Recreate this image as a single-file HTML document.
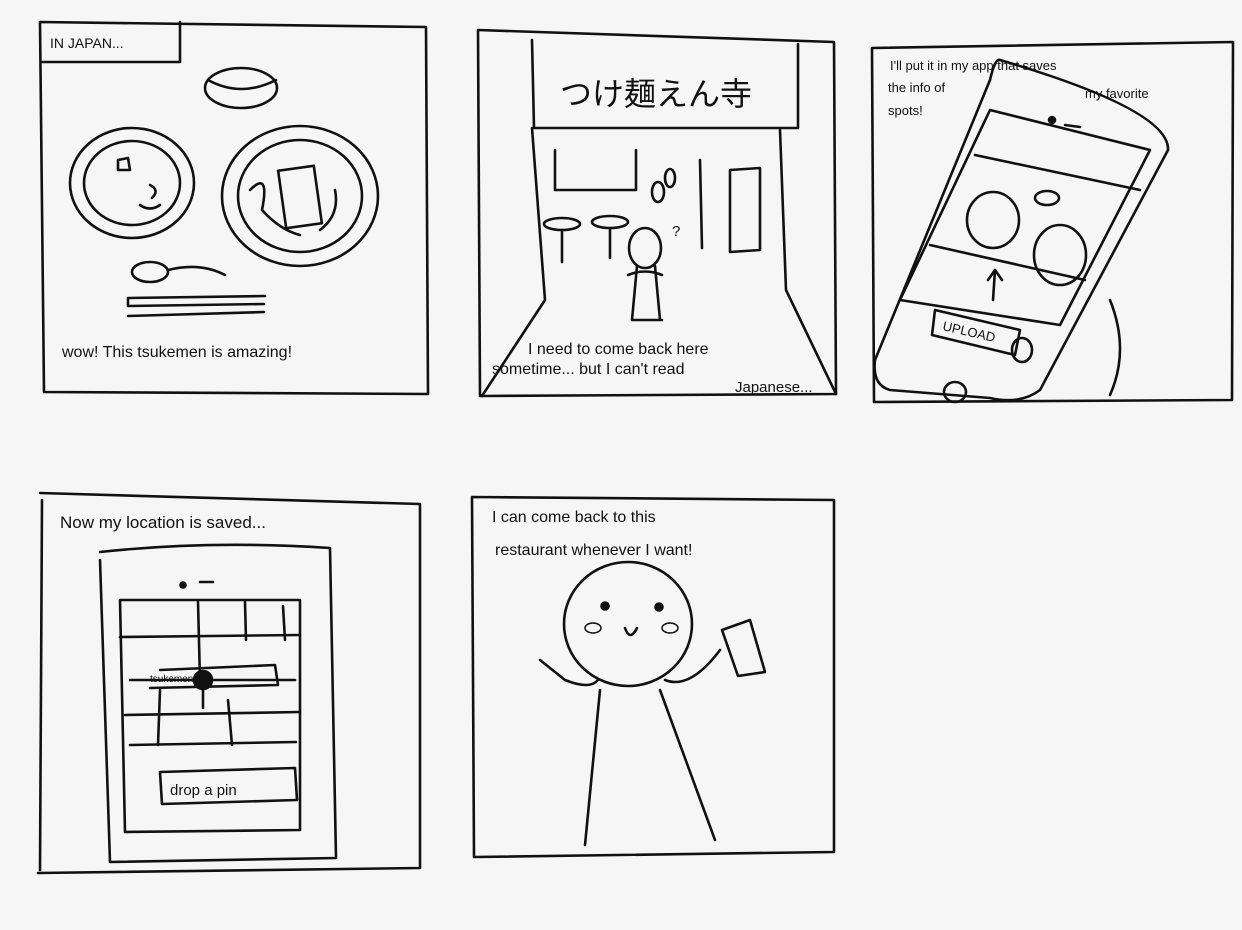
<!DOCTYPE html>
<html><head><meta charset="utf-8"><style>
html,body{margin:0;padding:0;background:#f6f6f6;}
svg{display:block}
text{font-family:"Liberation Sans","Noto Sans CJK JP",sans-serif;fill:#111}
</style></head><body>
<svg width="1242" height="930" viewBox="0 0 1242 930" xmlns="http://www.w3.org/2000/svg">
<rect width="1242" height="930" fill="#f6f6f6"/>
<g fill="none" stroke="#111" stroke-width="2.6" stroke-linecap="round" stroke-linejoin="round">
<!-- Panel 1 -->
<path d="M40 22 L426 27 L428 394 L44 392 Z"/>
<path d="M42 62 L180 62 L180 22"/>
<ellipse cx="241" cy="88" rx="36" ry="20"/>
<path d="M208 80 Q241 98 276 80"/>
<ellipse cx="132" cy="183" rx="62" ry="55"/>
<ellipse cx="132" cy="183" rx="48" ry="42"/>
<path d="M118 160 L128 158 L130 170 L118 170 Z M150 185 Q160 190 152 198 M140 205 Q150 212 160 205"/>
<ellipse cx="300" cy="196" rx="78" ry="70"/>
<ellipse cx="300" cy="196" rx="62" ry="56"/>
<rect x="282" y="168" width="36" height="58" transform="rotate(-8 300 197)"/>
<path d="M250 190 Q270 170 262 210 Q280 230 300 235 M320 230 Q340 215 335 190"/>
<ellipse cx="150" cy="272" rx="18" ry="10"/>
<path d="M168 270 Q200 262 225 275"/>
<path d="M128 298 L265 296 M128 306 L264 304 M128 316 L264 312 M128 298 L128 306"/>
<!-- Panel 2 -->
<path d="M478 30 L834 42 L836 394 L480 396 Z"/>
<path d="M532 40 L534 128 L798 128 L798 44"/>
<path d="M532 128 L545 300 L482 396 M780 130 L786 290 L836 394"/>
<path d="M555 150 L555 190 L636 190 L636 150"/>
<path d="M700 160 L702 248 M730 170 L760 168 L760 250 L730 252 Z"/>
<ellipse cx="562" cy="224" rx="18" ry="6"/><path d="M562 230 L562 262"/>
<ellipse cx="610" cy="222" rx="18" ry="6"/><path d="M610 228 L610 258"/>
<ellipse cx="645" cy="248" rx="16" ry="20"/>
<path d="M628 275 Q645 268 662 275 M637 266 L632 320 M655 266 L660 320 M632 320 L662 320"/>
<ellipse cx="658" cy="192" rx="6" ry="10"/><ellipse cx="670" cy="178" rx="5" ry="9"/>
<!-- Panel 3 -->
<path d="M872 48 L1233 42 L1232 400 L874 402 Z"/>
<path d="M1000 60 Q1170 110 1168 150 L1040 390 Q1020 405 990 398 L890 390 Q872 385 875 360 L990 80 Q995 58 1000 60 Z"/>
<path d="M990 110 L1150 150 L1060 325 L900 300 Z"/>
<path d="M975 155 L1140 190 M930 245 L1085 280"/>
<ellipse cx="993" cy="220" rx="26" ry="28"/><ellipse cx="1060" cy="255" rx="26" ry="30"/>
<ellipse cx="1047" cy="198" rx="12" ry="7"/>
<path d="M935 310 L1020 330 L1015 355 L932 335 Z"/>
<path d="M993 300 L995 270 M988 280 L995 270 L1002 280"/>
<ellipse cx="1022" cy="350" rx="10" ry="12"/>
<ellipse cx="955" cy="392" rx="11" ry="10"/>
<path d="M1110 300 Q1130 350 1110 395"/>
<circle cx="1052" cy="120" r="3" fill="#111"/><path d="M1065 125 L1080 127"/>
<!-- Panel 4 -->
<path d="M40 493 L420 504 L420 868 L38 873 M42 500 L40 870"/>
<path d="M100 552 Q210 540 330 548 L336 858 L110 862 L100 560"/>
<path d="M120 600 L300 600 L300 830 L125 832 Z"/>
<path d="M120 637 L300 635 M130 680 L295 680 M125 715 L300 712 M130 745 L296 742"/>
<path d="M198 602 L200 680 M245 602 L246 640 M283 606 L285 640 M160 690 L158 745 M228 700 L232 745"/>
<path d="M160 670 L275 665 L278 685 L150 688"/>
<circle cx="203" cy="680" r="9" fill="#111"/><path d="M203 688 L203 708"/>
<path d="M160 772 L295 768 L297 800 L162 804 Z"/>
<circle cx="183" cy="585" r="2.5" fill="#111"/><path d="M200 582 L213 582"/>
<!-- Panel 5 -->
<path d="M472 497 L834 500 L834 852 L474 857 Z"/>
<ellipse cx="628" cy="624" rx="64" ry="62"/>
<circle cx="605" cy="606" r="3.5" fill="#111"/><circle cx="659" cy="607" r="3.5" fill="#111"/>
<path d="M625 628 Q630 642 637 628"/>
<ellipse cx="593" cy="628" rx="8" ry="5" stroke-width="1.5"/><ellipse cx="670" cy="628" rx="8" ry="5" stroke-width="1.5"/>
<path d="M598 680 Q590 690 565 680 L540 660 M600 690 L585 845 M665 680 Q690 690 720 650 M660 690 L715 840"/>
<path d="M722 630 L750 620 L765 672 L738 676 Z"/>
</g>
<g font-size="15">
<text x="50" y="48" font-size="14">IN JAPAN...</text>
<text x="62" y="357" font-size="16">wow! This tsukemen is amazing!</text>
<text x="560" y="105" font-size="32" font-family="Noto Sans CJK JP,sans-serif">つけ麺えん寺</text>
<text x="672" y="236">?</text>
<text x="528" y="354" font-size="16">I need to come back here</text>
<text x="492" y="374" font-size="16">sometime... but I can't read</text>
<text x="735" y="392" font-size="15">Japanese...</text>
<text x="890" y="70" font-size="13">I'll put it in my app that saves</text>
<text x="888" y="92" font-size="13">the info of</text>
<text x="1085" y="98" font-size="13">my favorite</text>
<text x="888" y="115" font-size="13">spots!</text>
<text x="942" y="330" font-size="13" transform="rotate(13 942 330)">UPLOAD</text>
<text x="60" y="528" font-size="17">Now my location is saved...</text>
<text x="150" y="682" font-size="10">tsukemen enji</text>
<text x="170" y="795" font-size="15">drop a pin</text>
<text x="492" y="522" font-size="16">I can come back to this</text>
<text x="495" y="555" font-size="16">restaurant whenever I want!</text>
</g>
</svg>
</body></html>
